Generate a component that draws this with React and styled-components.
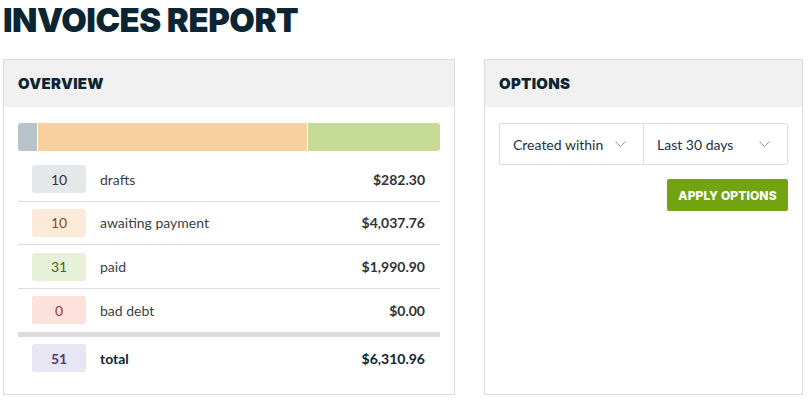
import React from "react";
import styled, { createGlobalStyle } from "styled-components";

const GlobalStyle = createGlobalStyle`
  html, body { margin: 0; padding: 0; background: #fff; }
  body { font-family: Lato, "Liberation Sans", sans-serif; color: #333; }
  * { box-sizing: border-box; }
`;

const HEAVY = `Inter, "Open Sans", sans-serif`;

const Page = styled.div`
  padding: 0 5px 0 3px;
`;

const Title = styled.h1`
  margin: 0;
  font-family: ${HEAVY};
  font-weight: 900;
  font-size: 33px;
  line-height: 40px;
  color: #0b2533;
  letter-spacing: -0.5px;
`;

const Columns = styled.div`
  display: flex;
  gap: 29px;
  margin-top: 19px;
`;

const Panel = styled.section`
  width: ${(p) => p.$w}px;
  height: 336px;
  border: 1px solid #dcdcdc;
  display: flex;
  flex-direction: column;
`;

const PanelHeader = styled.h2`
  margin: 0;
  height: 47px;
  display: flex;
  align-items: center;
  padding: 0 14px;
  background: #f1f1f1;
  font-family: ${HEAVY};
  font-weight: 900;
  font-size: 15px;
  color: #0b2533;
  letter-spacing: 0.3px;
`;

const PanelBody = styled.div`
  padding: 16px 14px 0 14px;
  display: flex;
  flex-direction: column;
`;

const Bar = styled.div`
  display: flex;
  gap: 1px;
  height: 28px;
  border-radius: 3px;
  overflow: hidden;
`;

const Segment = styled.div`
  background: ${(p) => p.$color};
`;

const List = styled.div`
  margin-top: 7px;
  display: flex;
  flex-direction: column;
`;

const Row = styled.div`
  display: flex;
  align-items: center;
  height: ${(p) => (p.$total ? 43 : 42.67)}px;
  padding: 0 15px 0 14px;
  border-bottom: ${(p) => (p.$thick ? "5px solid #dcdcdc" : p.$total ? "none" : "1px solid #dcdcdc")};
  box-sizing: content-box;
`;

const Badge = styled.span`
  width: 54px;
  height: 28px;
  border-radius: 3px;
  display: flex;
  align-items: center;
  justify-content: center;
  background: ${(p) => p.$bg};
  color: ${(p) => p.$fg};
  font-size: 14px;
  font-weight: ${(p) => (p.$bold ? 700 : 400)};
`;

const Label = styled.span`
  margin-left: 14px;
  flex: 1;
  font-size: 14px;
  color: ${(p) => (p.$bold ? "#0b2533" : "#3a3f44")};
  font-weight: ${(p) => (p.$bold ? 700 : 400)};
`;

const Amount = styled.span`
  font-size: 14px;
  font-weight: 700;
  color: ${(p) => (p.$bold ? "#0b2533" : "#333")};
`;

const SelectGroup = styled.div`
  display: flex;
  height: 42px;
  border: 1px solid #dcdcdc;
  border-radius: 2px;
`;

const SelectCell = styled.div`
  flex: 1;
  display: flex;
  align-items: center;
  justify-content: space-between;
  padding: 0 17px 0 13px;
  font-size: 14px;
  color: #1d3340;
  & + & {
    border-left: 1px solid #dcdcdc;
  }
`;

const Actions = styled.div`
  display: flex;
  justify-content: flex-end;
  margin-top: 14px;
`;

const Button = styled.button`
  width: 121px;
  height: 32px;
  border: none;
  border-radius: 2px;
  background: #72a411;
  color: #fff;
  font-family: ${HEAVY};
  font-weight: 800;
  font-size: 12px;
  letter-spacing: 0.1px;
  padding: 0;
`;

const Chevron = () => (
  <svg width="11" height="6" viewBox="0 0 11 6" fill="none">
    <polyline points="0.5,0.5 5.5,5.5 10.5,0.5" stroke="#8b98a1" strokeWidth="1" />
  </svg>
);

const rows = [
  { n: 10, label: "drafts", amount: 282.3, bg: "#e5e8eb", fg: "#333", bar: "#b8c2c9" },
  { n: 10, label: "awaiting payment", amount: 4037.76, bg: "#fdebda", fg: "#8a4b0f", bar: "#f8cf9f" },
  { n: 31, label: "paid", amount: 1990.9, bg: "#e6f1d8", fg: "#47691b", bar: "#c6dc96" },
  { n: 0, label: "bad debt", amount: 0, bg: "#fde2dc", fg: "#a33324", bar: "#f5b5aa" },
];

const fmt = (v) =>
  "$" + v.toLocaleString("en-US", { minimumFractionDigits: 2, maximumFractionDigits: 2 });

export default function App() {
  const total = rows.reduce((s, r) => s + r.amount, 0);
  const count = rows.reduce((s, r) => s + r.n, 0);
  return (
    <>
      <GlobalStyle />
      <Page>
        <Title>INVOICES REPORT</Title>
        <Columns>
          <Panel $w={452}>
            <PanelHeader>OVERVIEW</PanelHeader>
            <PanelBody>
              <Bar>
                {rows
                  .filter((r) => r.amount > 0)
                  .map((r) => (
                    <Segment key={r.label} $color={r.bar} style={{ flex: r.amount }} />
                  ))}
              </Bar>
              <List>
                {rows.map((r, i) => (
                  <Row key={r.label} $thick={i === rows.length - 1}>
                    <Badge $bg={r.bg} $fg={r.fg}>{r.n}</Badge>
                    <Label>{r.label}</Label>
                    <Amount>{fmt(r.amount)}</Amount>
                  </Row>
                ))}
                <Row $total>
                  <Badge $bg="#e8e6f3" $fg="#4b3b7c" $bold>{count}</Badge>
                  <Label $bold>total</Label>
                  <Amount $bold>{fmt(total)}</Amount>
                </Row>
              </List>
            </PanelBody>
          </Panel>
          <Panel $w={319}>
            <PanelHeader>OPTIONS</PanelHeader>
            <PanelBody>
              <SelectGroup>
                <SelectCell>
                  Created within
                  <Chevron />
                </SelectCell>
                <SelectCell>
                  Last 30 days
                  <Chevron />
                </SelectCell>
              </SelectGroup>
              <Actions>
                <Button>APPLY OPTIONS</Button>
              </Actions>
            </PanelBody>
          </Panel>
        </Columns>
      </Page>
    </>
  );
}
